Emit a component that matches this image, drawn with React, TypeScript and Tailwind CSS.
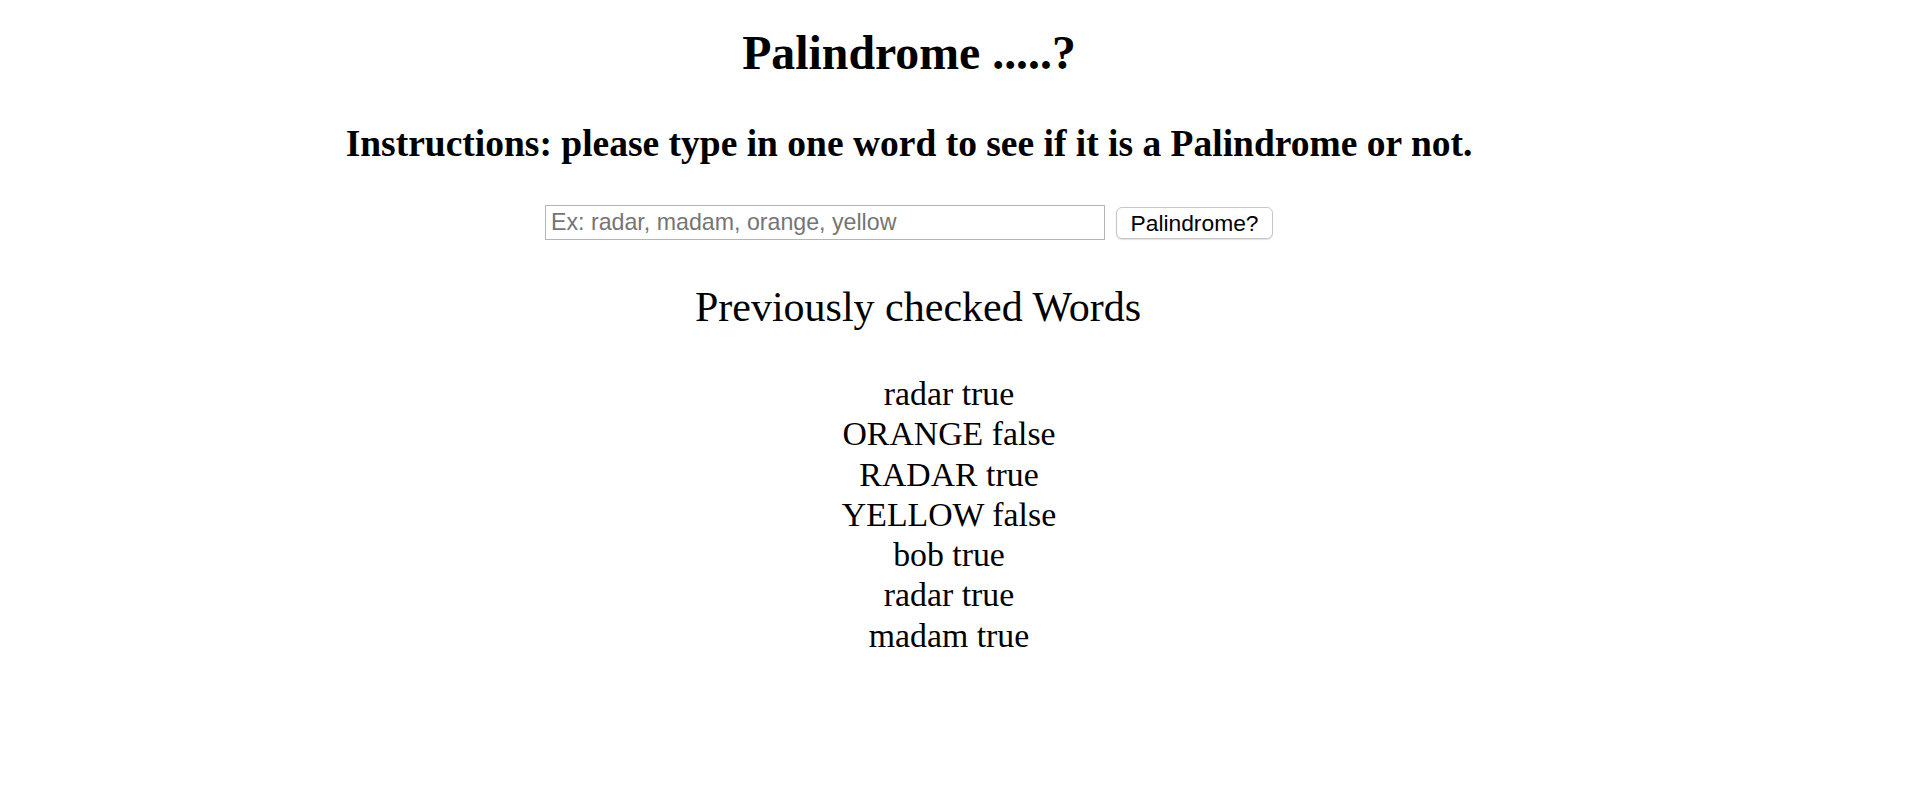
import React from "react";

const words: [string, boolean][] = [
  ["radar", true],
  ["ORANGE", false],
  ["RADAR", true],
  ["YELLOW", false],
  ["bob", true],
  ["radar", true],
  ["madam", true],
];

export default function App() {
  return (
    <div className="min-h-[786px] w-full bg-white text-black font-['Liberation_Serif',serif]">
      <div className="w-[1818px] flex flex-col items-stretch text-center">
        <h1 className="mt-[25px] h-[56px] text-[47.8px] leading-[56px] font-bold">
          Palindrome .....?
        </h1>
        <h3 className="mt-[40px] h-[45px] text-[37.5px] leading-[45px] font-bold">
          Instructions: please type in one word to see if it is a Palindrome or not.
        </h3>
        <div className="mt-[39px] flex justify-center items-center gap-[11px] h-[35px]">
          <input
            type="text"
            placeholder="Ex: radar, madam, orange, yellow"
            className="w-[560px] h-[35px] border border-[#b5b5b5] bg-white px-[5px] text-[23.2px] font-['Liberation_Sans',Arial,sans-serif] text-black placeholder:text-[#757575] outline-none"
          />
          <button
            type="button"
            className="w-[157px] h-[32px] rounded-[6px] border border-[#c6c6c6] bg-white shadow-[0_1px_1px_rgba(0,0,0,0.12)] text-[22.8px] leading-[30px] text-black font-['Liberation_Sans',Arial,sans-serif]"
          >
            Palindrome?
          </button>
        </div>
        <h2 className="mt-[43px] h-[48px] pl-[18px] text-[42px] leading-[48px] font-normal">
          Previously checked Words
        </h2>
        <ul className="mt-[43px] pl-[80px] list-none">
          {words.map(([w, v], i) => (
            <li key={i} className="text-[33.8px] leading-[40.3px]">
              {w} {v ? "true" : "false"}
            </li>
          ))}
        </ul>
      </div>
    </div>
  );
}
